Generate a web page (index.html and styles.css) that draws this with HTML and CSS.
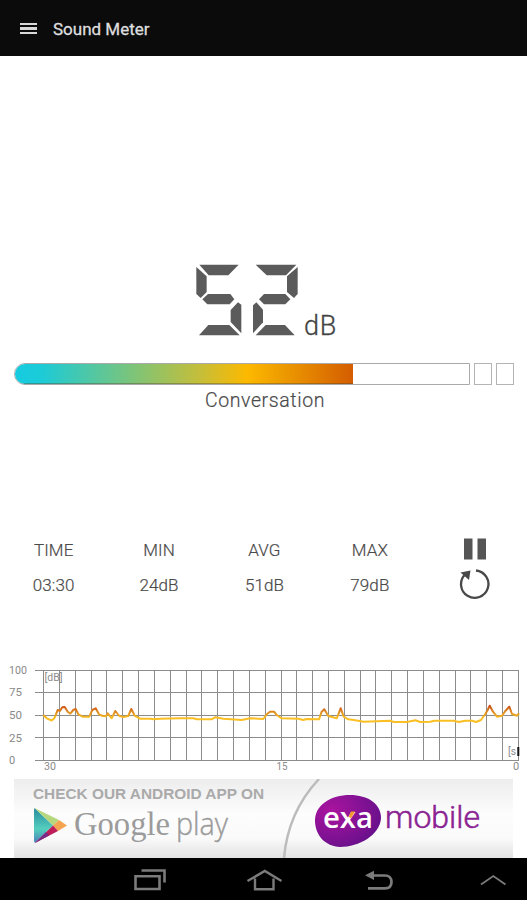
FILE: index.html
```html
<!DOCTYPE html>
<html lang="en">
<head>
    <meta charset="UTF-8">
    <title>Sound Meter</title>
    <link rel="stylesheet" href="styles.css">
</head>
<body>
<header class="topbar">
    <div class="menu"><span></span><span></span><span></span></div>
    <h1>Sound Meter</h1>
</header>

<main>
    <div class="reading">
        <svg class="digits" viewBox="45 42 312 216">
            <!-- 5 -->
            <polygon points="58,44 176,44 145,76 86,76"/>
            <polygon points="49,51 80,79 80,126 62,144 49,132"/>
            <polygon points="67,148 84,132 151,132 163,148 149,163 82,163"/>
            <polygon points="174,157 184,164 184,250 152,216 152,180"/>
            <polygon points="57,256 85,225 148,225 179,256"/>
            <!-- 2 -->
            <polygon points="227,44 349,44 318,76 260,76"/>
            <polygon points="353,51 353,132 342,144 321,126 321,79"/>
            <polygon points="237,148 252,132 316,132 331,148 316,163 252,163"/>
            <polygon points="229,157 249,179 249,217 219,250 219,166"/>
            <polygon points="227,256 257,225 315,225 344,256"/>
        </svg>
        <span class="unit">dB</span>
    </div>

    <div class="level">
        <div class="bar"><div class="fill"></div></div>
        <div class="box"></div>
        <div class="box"></div>
    </div>
    <p class="label">Conversation</p>

    <div class="stats">
        <div class="stat"><span>TIME</span><span>03:30</span></div>
        <div class="stat"><span>MIN</span><span>24dB</span></div>
        <div class="stat"><span>AVG</span><span>51dB</span></div>
        <div class="stat"><span>MAX</span><span>79dB</span></div>
        <div class="controls">
            <svg width="22" height="22" viewBox="0 0 22 22"><path d="M0 .5h8.500v21H0zM13.500 .5H22v21h-8.500z" fill="#555"/></svg>
            <svg width="32" height="32" viewBox="0 0 32 32">
                <path d="M17 2.500A13.700 13.700 0 1 1 6 6.500" fill="none" stroke="#484848" stroke-width="2.300"/>
                <path d="M1.500 4.500L11.500 2.500L10 12z" fill="#484848"/>
            </svg>
        </div>
    </div>

    <svg class="chart" viewBox="0 660 527 118" width="527" height="118">
        <defs>
            <linearGradient id="line" gradientUnits="userSpaceOnUse" x1="0" y1="705" x2="0" y2="718">
                <stop offset="0" stop-color="#cb4512"/>
                <stop offset=".45" stop-color="#d98222"/>
                <stop offset="1" stop-color="#fabf22"/>
            </linearGradient>
        </defs>
        <path class="grid" d="M43.500 670v91M59.500 670v91M75.500 670v91M91.500 670v91M106.500 670v91M122.500 670v91M138.500 670v91M154.500 670v91M170.500 670v91M186.500 670v91M201.500 670v91M217.500 670v91M233.500 670v91M249.500 670v91M265.500 670v91M281.500 670v91M296.500 670v91M312.500 670v91M328.500 670v91M344.500 670v91M360.500 670v91M375.500 670v91M391.500 670v91M407.500 670v91M423.500 670v91M439.500 670v91M455.500 670v91M470.500 670v91M486.500 670v91M502.500 670v91M518.500 670v91"/>
        <path class="grid" d="M35 670.500H519M35 692.500H519M35 715.500H519M35 737.500H519M35 760.500H519"/>
        <g class="axis">
            <text x="9" y="674" textLength="18" lengthAdjust="spacingAndGlyphs">100</text>
            <text x="9" y="696" textLength="13" lengthAdjust="spacingAndGlyphs">75</text>
            <text x="9" y="719" textLength="13" lengthAdjust="spacingAndGlyphs">50</text>
            <text x="9" y="741.500" textLength="13" lengthAdjust="spacingAndGlyphs">25</text>
            <text x="9" y="763.500">0</text>
            <text x="44" y="770" textLength="12" lengthAdjust="spacingAndGlyphs">30</text>
            <text x="276.500" y="770" textLength="11" lengthAdjust="spacingAndGlyphs">15</text>
            <text x="513" y="770">0</text>
            <text x="44.500" y="681" textLength="18" lengthAdjust="spacingAndGlyphs">[dB]</text>
            <text x="508" y="755" textLength="8" lengthAdjust="spacingAndGlyphs">[s</text>
        </g>
        <path d="M518.300 747v9" stroke="#111" stroke-width="2"/>
        <polyline fill="none" stroke="url(#line)" stroke-width="2" stroke-linejoin="round" points="43.3,715 46.7,718.3 51.7,720.5 54.3,718.3 57.7,710 60,711 62.3,707.3 64.7,707 67.7,711.7 70.3,713.7 73.3,710 75.7,709 78.3,714.3 82.7,716.7 89.3,716.7 92.3,710 95.7,708.3 99,714.3 102.7,716 106,716.3 107.7,713.3 111.7,718.3 115.3,711 119.3,716 123.3,717 128.3,716 131.3,709 134.7,715.7 140,718.7 150,718.7 154,719.3 160,718.7 180,718.3 193.3,718.3 196.7,719.3 211.7,719.3 215,717.3 223.3,718.7 241.7,720 250,718.3 263.3,719 266.7,714.3 270,711.7 274,711.7 276.7,715 281.7,718.3 298.3,718.7 303.3,720 306.7,719 319,719.3 321.7,711.7 324.3,709.3 328.3,716 336.7,718.3 340.7,708.3 343.7,716.7 348.3,719.3 353.7,720 363.7,721.7 390.3,720.7 393.7,722 407,722 415.3,720.3 420.3,722 430.3,721.7 434.3,720.7 453.7,720.7 458.7,722 465.3,720.7 472,720.7 476,722 481,720 485.3,714 487.7,710 489.7,705.7 493,711.7 497,716.7 502,715.7 505.3,711 509.3,706.7 512,714 517,715.7 519,713.3"/>
    </svg>

    <svg class="banner" viewBox="14 779 499 79" width="499" height="79">
        <defs>
            <linearGradient id="paper" x2="0" y2="1">
                <stop offset="0" stop-color="#ededed"/>
                <stop offset=".45" stop-color="#fdfdfd"/>
                <stop offset=".75" stop-color="#fafafa"/>
                <stop offset="1" stop-color="#e2e2e2"/>
            </linearGradient>
            <linearGradient id="teal" x2="0" y2="1">
                <stop offset="0" stop-color="#288b9e"/>
                <stop offset=".6" stop-color="#55cfbd"/>
                <stop offset="1" stop-color="#4a7fb8"/>
            </linearGradient>
            <radialGradient id="purple" cx=".25" cy=".3" r=".8">
                <stop offset="0" stop-color="#ab149f"/>
                <stop offset="1" stop-color="#67108b"/>
            </radialGradient>
        </defs>
        <rect x="14" y="779" width="499" height="79" fill="url(#paper)"/>
        <path d="M319 779Q288 812 284 858" fill="none" stroke="#bcbcbc" stroke-width="2.500"/>
        <text class="check" x="33" y="799" textLength="231" lengthAdjust="spacingAndGlyphs">CHECK OUR ANDROID APP ON</text>

        <path d="M34.500 808L53 825.500L35 843Q34 842 34 840V810z" fill="url(#teal)"/>
        <path d="M34.500 808L59 820L53 825.500z" fill="#b5d77d"/>
        <path d="M59 820L67 825.500L58 831L53 825.500z" fill="#f4a350"/>
        <path d="M53 825.500L58 831L35 843z" fill="#bd1d58"/>
        <path d="M46 832L49 835.500L35 843z" fill="#772b87"/>

        <text class="google" x="74" y="835" textLength="96" lengthAdjust="spacingAndGlyphs">Google</text>
        <text class="play" x="176" y="835" textLength="52" lengthAdjust="spacingAndGlyphs">play</text>

        <path d="M315 822C314 805 331 795 350 795C368 795 381 804 381 818C380 835 359 847 340 847C325 846 316 836 315 822z" fill="url(#purple)"/>
        <text class="exa" x="323" y="828" textLength="50" lengthAdjust="spacingAndGlyphs">exa</text>
        <path d="M348.500 817L351 811.500H355L351 818z" fill="#f29a2e"/>
        <text class="mobile" x="385" y="828" textLength="95" lengthAdjust="spacingAndGlyphs">mobile</text>
    </svg>
</main>

<footer class="navbar">
    <svg viewBox="120 858 407 42" width="407" height="42">
        <g fill="none" stroke="#7b7b7b" stroke-width="2">
            <path d="M135.500 876.300H159.500V889H135.500z" stroke-width="2.600"/>
            <path d="M141.500 870.500H164.500V882.500" stroke-width="2.600"/>
            <path d="M247.500 881L264.800 871L281.500 881M255 878.500V889.200H273.500V878.500" stroke-width="2.400"/>
            <path d="M373 875.500H385C389 875.500 391.500 878 391.500 882C391.500 886 389 888.300 385 888.300H368" stroke-width="2.700"/>
            <path d="M481 884.500L493.300 876L505.500 884.500" stroke-width="1.800"/>
        </g>
        <path d="M365 875.300L374 870.800V880z" fill="#7b7b7b"/>
    </svg>
</footer>
</body>
</html>
```
FILE: styles.css
```css
* {
    box-sizing: border-box;
}
body {
    margin: 0;
    height: 900px;
    display: flex;
    flex-direction: column;
    background: #fff;
    color: #4a4a4a;
    font-family: Roboto, "Liberation Sans", sans-serif;
    overflow: hidden;
}
svg {
    display: block;
}
.topbar {
    height: 56px;
    flex: none;
    display: flex;
    align-items: center;
    gap: 16px;
    padding: 1px 20px 0;
    background: #0b0b0b;
}
.topbar h1 {
    margin: 0;
    padding-top: 1px;
    color: #dedede;
    font-size: 17px;
    font-weight: 400;
    -webkit-text-stroke: .3px #dedede;
}
.menu {
    display: flex;
    flex-direction: column;
    gap: 2px;
    width: 17px;
}
.menu span {
    height: 2.5px;
    background: #d8d8d8;
}
main {
    flex: 1;
    display: flex;
    flex-direction: column;
}
.reading {
    display: flex;
    align-items: flex-end;
    margin: 208px 0 0 195px;
    height: 72px;
}
.digits {
    width: 104px;
    height: 72px;
    fill: #5b5b5b;
}
.unit {
    margin-left: 5px;
    font-size: 27px;
    font-weight: 300;
    line-height: 20px;
    letter-spacing: .8px;
    color: #444;
    -webkit-text-stroke: .3px #444;
}

/* level bar */
.level {
    display: flex;
    gap: 4px;
    height: 22px;
    margin: 27px 13px 0 14px;
}
.bar {
    flex: 1;
    border: 1px solid #aaa;
    border-radius: 11px 0 0 11px;
    overflow: hidden;
}
.fill {
    width: 338px;
    height: 100%;
    background: linear-gradient(90deg, #16cbe0 0, #1bcbd8 25px, #7fc477 120px, #c5be3a 185px, #fdb900 232px, #ee9d00 265px, #d45d00 338px);
    box-shadow: inset 0 -1px rgba(80, 70, 40, .4);
}
.box {
    width: 18px;
    border: 1px solid #b4b4b4;
}
.label {
    margin: 4px 0 0;
    padding-left: 3px;
    text-align: center;
    font-size: 19.5px;
    font-weight: 300;
    line-height: 24px;
    letter-spacing: .6px;
    -webkit-text-stroke: .2px #4a4a4a;
}

/* time, min, avg, max */
.stats {
    display: grid;
    grid-template-columns: repeat(5, 105.4px);
    margin-top: 125px;
    padding-left: 1px;
    height: 65px;
}
.stat {
    display: flex;
    flex-direction: column;
    align-items: center;
    gap: 11px;
    font-size: 17px;
    line-height: 24px;
    font-weight: 300;
    letter-spacing: .1px;
    -webkit-text-stroke: .2px #4a4a4a;
}
.controls {
    display: flex;
    flex-direction: column;
    align-items: center;
    gap: 8px;
}
.chart {
    margin-top: 57px;
}
.grid {
    fill: none;
    stroke: #8c8c8c;
}
.axis {
    font-size: 11px;
    fill: #8a8a8a;
}

/* banner */
.banner {
    margin: 1px 0 0 14px;
}
.check {
    font: bold 15px "Liberation Sans", sans-serif;
    fill: #aaa;
}
.google {
    font: 33px "Liberation Serif", serif;
    fill: #9b9b9b;
}
.play {
    font: 300 31px "Open Sans", sans-serif;
    fill: #9b9b9b;
    stroke: #9b9b9b;
    stroke-width: .4px;
}
.exa {
    font: 600 29px "Open Sans", sans-serif;
    fill: #fff;
}
.mobile {
    font: 300 31px Roboto, sans-serif;
    fill: #8a2392;
    stroke: #8a2392;
    stroke-width: .5px;
}
.navbar {
    flex: none;
    height: 42px;
    padding-left: 120px;
    background: #000;
}
```
